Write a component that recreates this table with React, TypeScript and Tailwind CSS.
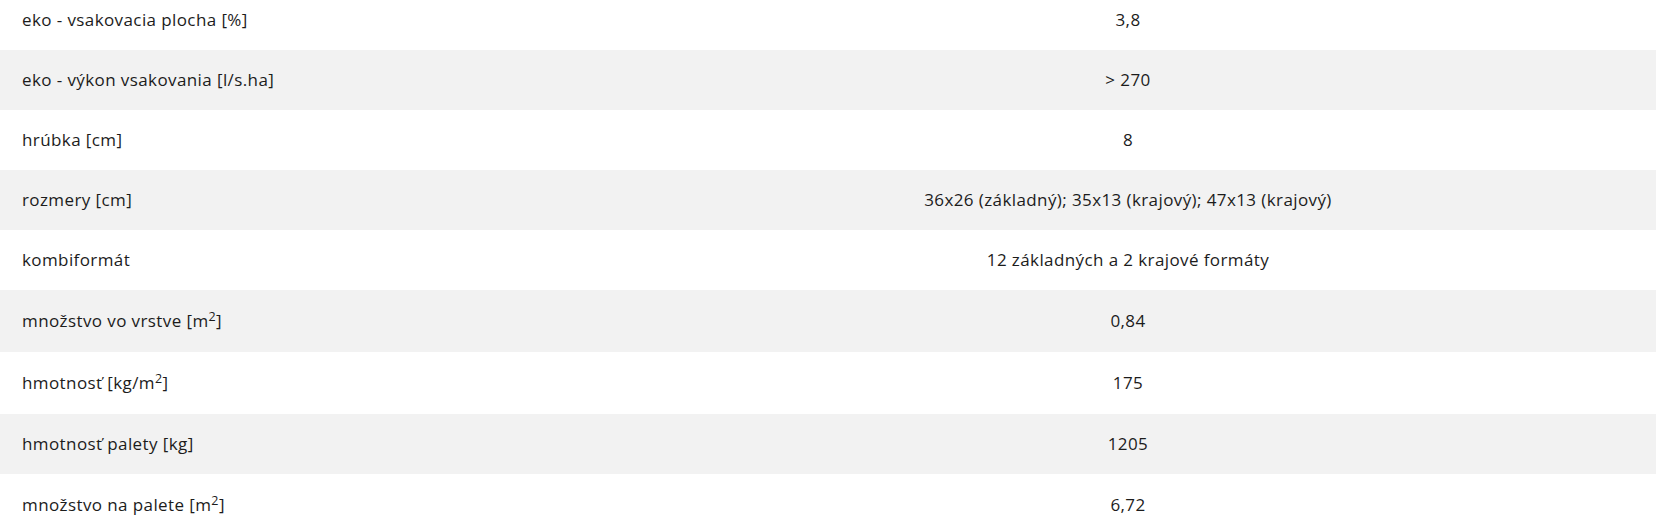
import React from "react";

type Row = { label: React.ReactNode; value: string; sup?: boolean };

const Sup = () => <sup className="text-[12.5px]">2</sup>;

const rows: Row[] = [
  { label: "eko - vsakovacia plocha [%]", value: "3,8" },
  { label: "eko - výkon vsakovania [l/s.ha]", value: "> 270" },
  { label: "hrúbka [cm]", value: "8" },
  { label: "rozmery [cm]", value: "36x26 (základný); 35x13 (krajový); 47x13 (krajový)" },
  { label: "kombiformát", value: "12 základných a 2 krajové formáty" },
  { label: <>množstvo vo vrstve [m<Sup />]</>, value: "0,84", sup: true },
  { label: <>hmotnosť [kg/m<Sup />]</>, value: "175", sup: true },
  { label: "hmotnosť palety [kg]", value: "1205" },
  { label: <>množstvo na palete [m<Sup />]</>, value: "6,72", sup: true },
];

export default function App() {
  return (
    <div
      className="w-[1656px] h-[529px] overflow-hidden bg-white text-[#1c1c1c]"
      style={{ fontFamily: "'Open Sans', 'Noto Sans', sans-serif" }}
    >
      <div className="-mt-[10px] flex flex-col">
        {rows.map((r, i) => (
          <div
            key={i}
            className={`grid grid-cols-[600px_1fr] items-center text-[17px] leading-[24px] tracking-[0.4px] ${
              r.sup ? "py-[19px]" : "py-[18px]"
            } ${i % 2 === 1 ? "bg-[#f2f2f2]" : "bg-white"}`}
          >
            <div className="pl-[22px]">{r.label}</div>
            <div className="text-center">{r.value}</div>
          </div>
        ))}
      </div>
    </div>
  );
}
